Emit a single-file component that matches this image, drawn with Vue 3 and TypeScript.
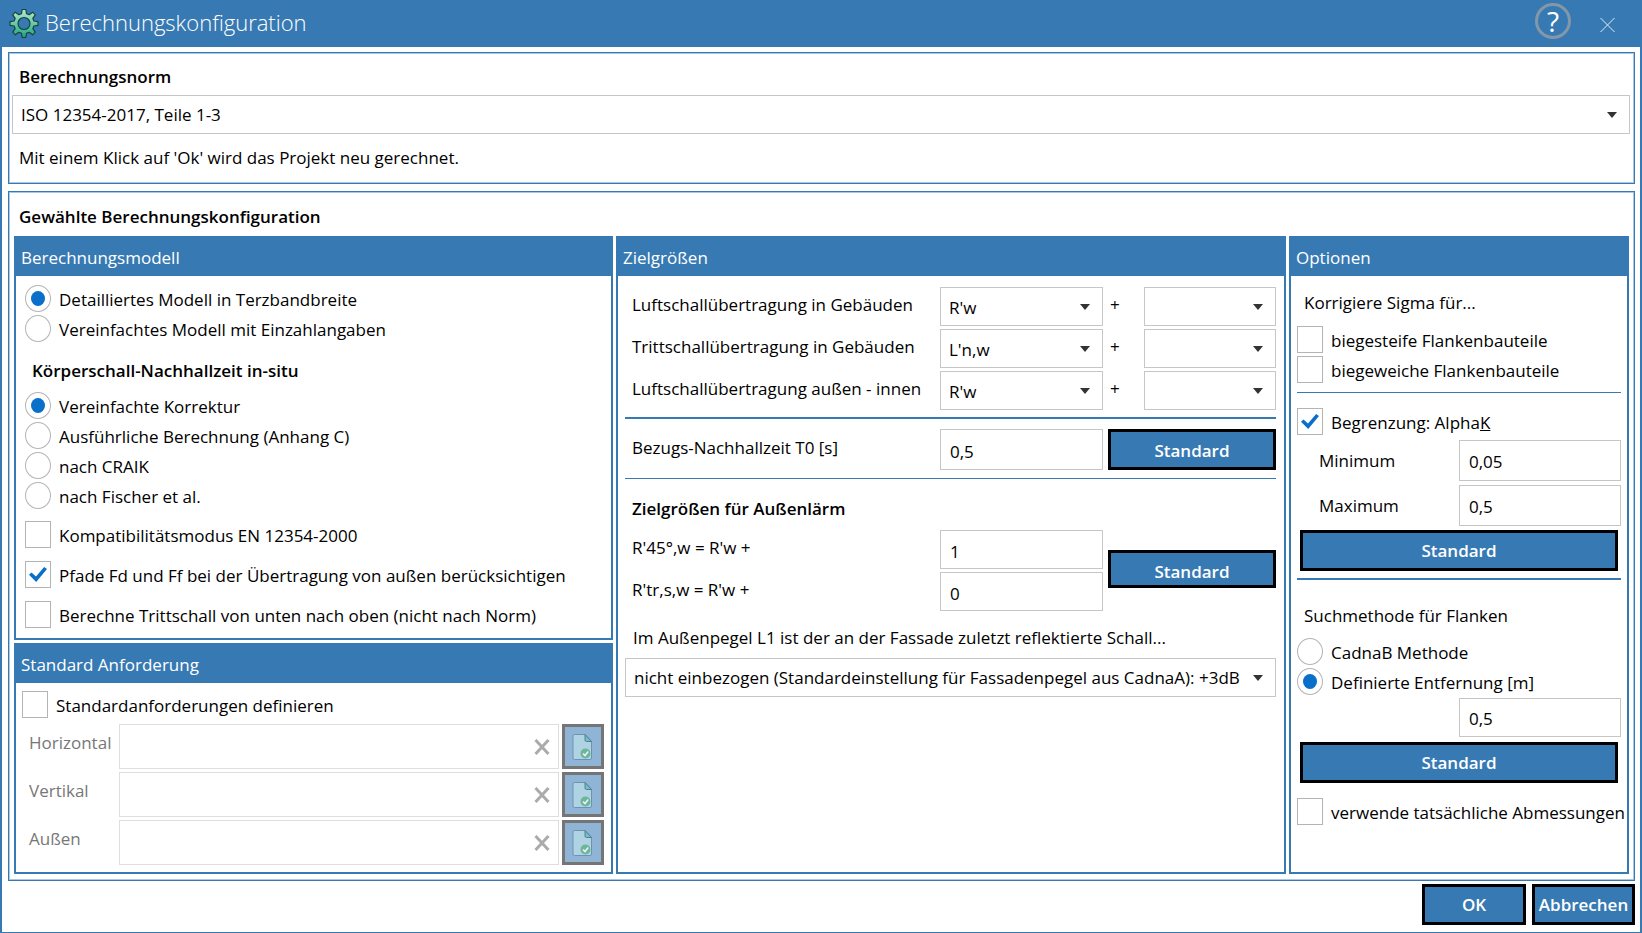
<script setup lang="ts">
import { reactive, ref } from 'vue'

interface Choice {
  value: string
  label: string
}
interface TargetRow {
  id: string
  label: string
  value: string
  extra: string
}
interface RequirementRow {
  id: string
  label: string
  value: string
}

const standard = ref('ISO 12354-2017, Teile 1-3')

const model = ref('detailed')
const models: Choice[] = [
  { value: 'detailed', label: 'Detailliertes Modell in Terzbandbreite' },
  { value: 'simple', label: 'Vereinfachtes Modell mit Einzahlangaben' },
]

const reverberation = ref('simple')
const reverberations: Choice[] = [
  { value: 'simple', label: 'Vereinfachte Korrektur' },
  { value: 'annexC', label: 'Ausführliche Berechnung (Anhang C)' },
  { value: 'craik', label: 'nach CRAIK' },
  { value: 'fischer', label: 'nach Fischer et al.' },
]

const modelFlags = reactive([
  { label: 'Kompatibilitätsmodus EN 12354-2000', checked: false },
  { label: 'Pfade Fd und Ff bei der Übertragung von außen berücksichtigen', checked: true },
  { label: 'Berechne Trittschall von unten nach oben (nicht nach Norm)', checked: false },
])

const defineRequirements = ref(false)
const requirements = reactive<RequirementRow[]>([
  { id: 'horizontal', label: 'Horizontal', value: '' },
  { id: 'vertical', label: 'Vertikal', value: '' },
  { id: 'outside', label: 'Außen', value: '' },
])

const targets = reactive<TargetRow[]>([
  { id: 'air', label: 'Luftschallübertragung in Gebäuden', value: "R'w", extra: '' },
  { id: 'impact', label: 'Trittschallübertragung in Gebäuden', value: "L'n,w", extra: '' },
  { id: 'facade', label: 'Luftschallübertragung außen - innen', value: "R'w", extra: '' },
])

const t0 = ref('0,5')
const r45 = ref('1')
const rtrs = ref('0')
const facadeLevel = ref('nicht einbezogen (Standardeinstellung für Fassadenpegel aus CadnaA): +3dB')

const sigmaFlags = reactive([
  { label: 'biegesteife Flankenbauteile', checked: false },
  { label: 'biegeweiche Flankenbauteile', checked: false },
])
const limitAlpha = ref(true)
const alphaMin = ref('0,05')
const alphaMax = ref('0,5')

const search = ref('distance')
const searches: Choice[] = [
  { value: 'cadnab', label: 'CadnaB Methode' },
  { value: 'distance', label: 'Definierte Entfernung [m]' },
]
const distance = ref('0,5')
const realDimensions = ref(false)

function resetOutdoor(): void {
  r45.value = '1'
  rtrs.value = '0'
}
function resetAlpha(): void {
  alphaMin.value = '0,05'
  alphaMax.value = '0,5'
}
</script>

<template>
  <main class="window">
    <header class="titlebar">
      <svg class="gear" viewBox="0 0 30 30" aria-hidden="true">
        <defs>
          <linearGradient id="gearFill" x1="0" y1="0" x2="0" y2="1">
            <stop offset="0" stop-color="#b9ead0" />
            <stop offset="0.5" stop-color="#6cc9a6" />
            <stop offset="1" stop-color="#1fa27e" />
          </linearGradient>
        </defs>
        <path
          fill="url(#gearFill)"
          fill-rule="evenodd"
          stroke="#17443f"
          stroke-width="1.2"
          stroke-linejoin="round"
          d="M13.2 1h3.600l.7 4.100 2.700 1.100 3.500-2.500 2.600 2.600-2.500 3.500 1.100 2.700 4.100.7v3.600l-4.100.7-1.100 2.700 2.500 3.500-2.600 2.600-3.500-2.500-2.700 1.100-.7 4.100h-3.600l-.7-4.100-2.700-1.100-3.500 2.500-2.600-2.600 2.500-3.500-1.100-2.700-4.100-.7v-3.600l4.100-.7 1.100-2.700-2.500-3.500 2.600-2.600 3.500 2.500 2.700-1.100zM15 9a6 6 0 1 0 0 12 6 6 0 0 0 0-12z"
        />
      </svg>
      <h1>Berechnungskonfiguration</h1>
      <button class="help" type="button" aria-label="Hilfe">?</button>
      <button class="close" type="button" aria-label="Schließen">
        <svg viewBox="0 0 15 16" aria-hidden="true">
          <path d="M.5 1l14 14M14.5 1l-14 14" fill="none" stroke="#dfeaf4" stroke-width="1" />
        </svg>
      </button>
    </header>

    <section class="frame norm">
      <h2><label for="standard">Berechnungsnorm</label></h2>
      <select id="standard" v-model="standard" class="field">
        <option>ISO 12354-2017, Teile 1-3</option>
      </select>
      <p>Mit einem Klick auf 'Ok' wird das Projekt neu gerechnet.</p>
    </section>

    <section class="frame config">
      <h2>Gewählte Berechnungskonfiguration</h2>
      <div class="columns">
        <div class="stack">
          <section class="box model">
            <h3>Berechnungsmodell</h3>
            <div class="body">
              <div class="choices">
                <label v-for="m in models" :key="m.value" class="choice">
                  <input v-model="model" type="radio" name="model" :value="m.value" />
                  <span>{{ m.label }}</span>
                </label>
              </div>
              <h4>Körperschall-Nachhallzeit in-situ</h4>
              <div class="choices">
                <label v-for="r in reverberations" :key="r.value" class="choice">
                  <input v-model="reverberation" type="radio" name="reverberation" :value="r.value" />
                  <span>{{ r.label }}</span>
                </label>
              </div>
              <div class="choices flags">
                <label v-for="f in modelFlags" :key="f.label" class="choice">
                  <input v-model="f.checked" type="checkbox" />
                  <span>{{ f.label }}</span>
                </label>
              </div>
            </div>
          </section>

          <section class="box require">
            <h3>Standard Anforderung</h3>
            <div class="body">
              <label class="choice">
                <input v-model="defineRequirements" type="checkbox" />
                <span>Standardanforderungen definieren</span>
              </label>
              <div v-for="r in requirements" :key="r.id" class="requirement">
                <label :for="r.id">{{ r.label }}</label>
                <div class="clearable">
                  <input :id="r.id" v-model="r.value" class="field" type="text" :disabled="!defineRequirements" />
                  <button type="button" class="clear" :disabled="!defineRequirements" aria-label="Leeren" @click="r.value = ''">
                    <svg viewBox="0 0 16 16" aria-hidden="true">
                      <path d="M1.5 1l13 14M14.5 1l-13 14" fill="none" stroke="#ababab" stroke-width="3" />
                    </svg>
                  </button>
                </div>
                <button type="button" class="pick" :disabled="!defineRequirements" aria-label="Auswählen">
                  <svg viewBox="0 0 22 28" aria-hidden="true">
                    <path
                      d="M2.500 1.500H13l6.500 7V25q0 1.500-1.500 1.500H2.500Q1 26.500 1 25V3q0-1.500 1.500-1.500z"
                      fill="#b0d3e4"
                      stroke="#6a96ad"
                    />
                    <path d="M13 1.500V7q0 1.500 1.500 1.500h5z" fill="#7dbcc4" stroke="#4d7f94" />
                    <circle cx="13.500" cy="20.500" r="5" fill="#70b49c" />
                    <path d="M11 20.500l2 2 3.200-4" fill="none" stroke="#e6f3f2" stroke-width="1.600" />
                  </svg>
                </button>
              </div>
            </div>
          </section>
        </div>

        <section class="box target">
          <h3>Zielgrößen</h3>
          <div class="body">
            <div class="rows">
              <div v-for="t in targets" :key="t.id" class="row">
                <label :for="t.id">{{ t.label }}</label>
                <select :id="t.id" v-model="t.value" class="field">
                  <option>{{ t.value }}</option>
                </select>
                <div class="extra">
                  <span>+</span>
                  <select v-model="t.extra" class="field" :aria-label="t.label + ' Zusatz'">
                    <option value=""></option>
                  </select>
                </div>
              </div>
            </div>
            <hr class="thick" />
            <div class="row tall">
              <label for="t0">Bezugs-Nachhallzeit T0 [s]</label>
              <input id="t0" v-model="t0" class="field" type="text" />
              <button type="button" class="action" @click="t0 = '0,5'">Standard</button>
            </div>
            <hr />
            <h4>Zielgrößen für Außenlärm</h4>
            <div class="outdoor">
              <div class="rows">
                <div class="row pair">
                  <label for="r45">R'45°,w = R'w +</label>
                  <input id="r45" v-model="r45" class="field" type="text" />
                </div>
                <div class="row pair">
                  <label for="rtrs">R'tr,s,w = R'w +</label>
                  <input id="rtrs" v-model="rtrs" class="field" type="text" />
                </div>
              </div>
              <button type="button" class="action" @click="resetOutdoor">Standard</button>
            </div>
            <label class="facade-label" for="facade-level">Im Außenpegel L1 ist der an der Fassade zuletzt reflektierte Schall...</label>
            <select id="facade-level" v-model="facadeLevel" class="field">
              <option>nicht einbezogen (Standardeinstellung für Fassadenpegel aus CadnaA): +3dB</option>
            </select>
          </div>
        </section>

        <section class="box options">
          <h3>Optionen</h3>
          <div class="body">
            <p>Korrigiere Sigma für...</p>
            <div class="choices">
              <label v-for="f in sigmaFlags" :key="f.label" class="choice">
                <input v-model="f.checked" type="checkbox" />
                <span>{{ f.label }}</span>
              </label>
            </div>
            <hr />
            <label class="choice limit">
              <input v-model="limitAlpha" type="checkbox" />
              <span>Begrenzung: Alpha<u>K</u></span>
            </label>
            <div class="limits">
              <label for="amin">Minimum</label>
              <input id="amin" v-model="alphaMin" class="field" type="text" />
              <label for="amax">Maximum</label>
              <input id="amax" v-model="alphaMax" class="field" type="text" />
            </div>
            <button type="button" class="action" @click="resetAlpha">Standard</button>
            <hr class="thick" />
            <p class="search">Suchmethode für Flanken</p>
            <div class="choices">
              <label v-for="s in searches" :key="s.value" class="choice">
                <input v-model="search" type="radio" name="search" :value="s.value" />
                <span>{{ s.label }}</span>
              </label>
            </div>
            <input v-model="distance" class="field distance" type="text" aria-label="Definierte Entfernung" />
            <button type="button" class="action" @click="distance = '0,5'">Standard</button>
            <label class="choice real">
              <input v-model="realDimensions" type="checkbox" />
              <span>verwende tatsächliche Abmessungen</span>
            </label>
          </div>
        </section>
      </div>
    </section>

    <footer>
      <button type="button" class="action ok">OK</button>
      <button type="button" class="action cancel">Abbrechen</button>
    </footer>
  </main>
</template>

<style>
body {
  margin: 0;
  background: #fff;
}
</style>

<style scoped>
.window {
  --blue: #377ab3;
  box-sizing: border-box;
  min-height: 100vh;
  display: flex;
  flex-direction: column;
  border: 2px solid var(--blue);
  border-top: 0;
  background: #fff;
  color: #000;
  font: 17px/24px "Open Sans", "Noto Sans", sans-serif;
}
*,
*::before {
  box-sizing: border-box;
}
h1,
h2,
h3,
h4,
p {
  margin: 0;
}
button,
input,
select {
  font: inherit;
  color: inherit;
  margin: 0;
}
label,
button,
h3,
p {
  white-space: nowrap;
}

.titlebar {
  height: 47px;
  display: flex;
  align-items: flex-start;
  background: var(--blue);
  color: #fff;
}
.gear {
  width: 30px;
  height: 31px;
  margin: 8px 6px 0 7px;
}
h1 {
  flex: 1;
  font-size: 22px;
  line-height: 44px;
  font-weight: 300;
}
.help {
  width: 36px;
  height: 36px;
  margin: 3px 29px 0 0;
  padding: 0;
  border: 3px solid #8397a8;
  border-radius: 50%;
  background: none;
  font-size: 28px;
  line-height: 30px;
}
.close {
  width: 15px;
  height: 16px;
  margin: 17px 25px 0 0;
  padding: 0;
  border: 0;
  background: none;
}
.close svg {
  display: block;
}

.frame {
  margin: 0 5px 0 6px;
  border: 1px solid var(--blue);
  box-shadow: inset 0 0 0 1px #a9c7df;
}
h2 {
  font-size: 17px;
  font-weight: 600;
}
.norm {
  margin-top: 5px;
  padding: 12px 4px 1px 3px;
}
.norm h2 {
  padding: 0 7px 6px;
}
.norm .field {
  width: 100%;
}
.norm p {
  padding: 12px 7px;
}
.config {
  flex: 1;
  margin-top: 7px;
  padding: 13px 5px 6px;
  display: flex;
  flex-direction: column;
}
.config h2 {
  padding: 0 5px 7px;
}

.columns {
  flex: 1;
  display: grid;
  grid-template-columns: minmax(0, 599fr) minmax(0, 670fr) minmax(0, 340fr);
  gap: 3px;
}
.stack {
  display: flex;
  flex-direction: column;
  gap: 3px;
}
.box {
  border: 2px solid var(--blue);
  border-top: 0;
}
.require {
  flex: 1;
}
h3 {
  height: 40px;
  padding: 1px 5px 0;
  background: var(--blue);
  color: #fff;
  font-size: 17px;
  line-height: 41px;
  font-weight: 400;
}
h4 {
  font-size: 17px;
  font-weight: 600;
}

.choices {
  display: flex;
  flex-direction: column;
  gap: 3px;
}
.choice {
  display: flex;
  align-items: center;
  gap: 8px;
  height: 27px;
}
.choice span {
  padding-top: 2px;
}
input[type='radio'],
input[type='checkbox'] {
  appearance: none;
  flex: none;
  width: 26px;
  height: 27px;
  border: 1px solid #b4b4b4;
  background: #fff;
  display: grid;
  place-items: center;
}
input[type='radio'] {
  border-radius: 50%;
}
input[type='radio']:checked::before {
  content: '';
  width: 14px;
  height: 15px;
  border-radius: 50%;
  background: #0a6fc9;
}
input[type='checkbox']:checked::before {
  content: '';
  width: 18px;
  height: 15px;
  background: #0a6fc9;
  clip-path: polygon(0 52%, 14% 36%, 39% 63%, 84% 0, 100% 14%, 40% 100%);
}

.field {
  height: 39px;
  min-width: 0;
  padding: 1px 9px 0;
  border: 1px solid #c6c6c6;
  border-radius: 0;
  background: #fff;
}
select.field {
  appearance: none;
  padding: 1px 8px 0;
  background: #fff url("data:image/svg+xml,%3Csvg xmlns='http://www.w3.org/2000/svg' width='10' height='6'%3E%3Cpath d='M0 0h10L5 6z' fill='%23333'/%3E%3C/svg%3E") no-repeat right 12px top 16px;
}
.action {
  height: 41px;
  padding: 1px 0 0;
  border: 3px solid #000;
  background: var(--blue);
  color: #fff;
  font-weight: 600;
}

.model .body {
  padding: 9px 9px 10px;
}
.model h4 {
  padding: 17px 7px 9px;
}
.model .flags {
  gap: 13px;
  margin-top: 12px;
}

.require .body {
  padding: 8px 7px 7px 6px;
}
.requirement {
  display: flex;
  gap: 3px;
  margin-top: 3px;
}
.require .choice {
  margin-bottom: 6px;
}
.requirement > label {
  width: 97px;
  padding: 7px 7px;
  color: #777;
}
.clearable {
  flex: 1;
  display: flex;
  align-items: center;
  height: 45px;
  border: 1px solid #dedede;
}
.requirement > label {
  flex: none;
  width: 94px;
}
.clearable .field {
  flex: 1;
  border: 0;
  background: none;
}
.clear {
  width: 16px;
  height: 16px;
  margin-right: 8px;
  padding: 0;
  border: 0;
  background: none;
}
.clear svg {
  display: block;
}
.pick {
  width: 42px;
  height: 45px;
  padding: 0;
  border: 3px solid #757575;
  background: #8fb4d5;
  display: grid;
  place-items: center;
}
.pick svg {
  width: 22px;
  height: 28px;
}

hr {
  width: 100%;
  margin: 0;
  border: 0;
  border-top: 1px solid var(--blue);
}
hr.thick {
  border-top-width: 2px;
}
.target .body {
  padding: 11px 8px 0 7px;
  display: flex;
  flex-direction: column;
}
.rows {
  display: flex;
  flex-direction: column;
  gap: 3px;
}
.row {
  display: grid;
  grid-template-columns: 1fr 163px 168px;
  column-gap: 5px;
}
.row > label {
  padding: 6px 7px;
}
.row .field {
  padding-top: 3px;
}
.extra {
  display: grid;
  grid-template-columns: 36px 1fr;
}
.extra span {
  padding: 6px 0 0 2px;
}
.target .thick {
  margin: 7px 0 10px;
}
.tall .field {
  height: 41px;
}
.tall > label {
  padding-top: 7px;
}
.tall .action {
  padding-top: 2px;
}
.tall + hr {
  margin: 8px 0 0;
}
.target h4 {
  padding: 18px 7px 9px;
}
.outdoor {
  display: grid;
  grid-template-columns: 1fr 168px;
  column-gap: 5px;
}
.outdoor .action {
  height: 38px;
  margin-top: 20px;
  padding-top: 6px;
}
.pair {
  grid-template-columns: 1fr 163px;
}
.facade-label {
  padding: 15px 8px 8px;
}

.options .body {
  padding: 14px 6px 0;
  display: flex;
  flex-direction: column;
}
.options p {
  padding: 1px 7px 11px;
}
.options .choices + hr {
  margin: 9px 0 15px;
}
.limits {
  display: grid;
  grid-template-columns: 1fr 162px;
  row-gap: 3px;
  margin: 5px 0 3px;
}
.limits label {
  padding: 9px 22px;
}
.limits .field {
  height: 41px;
}
.options .action {
  margin: 0 3px;
}
.options .thick {
  margin: 7px 0 23px;
}
.options p.search {
  padding-bottom: 10px;
}
.options .distance {
  width: 162px;
  margin: 3px 0 5px;
  align-self: flex-end;
}
.options .real {
  margin-top: 15px;
}

footer {
  display: flex;
  justify-content: flex-end;
  gap: 6px;
  padding: 3px 5px 7px;
}
.ok {
  width: 104px;
}
.cancel {
  width: 103px;
}
</style>
